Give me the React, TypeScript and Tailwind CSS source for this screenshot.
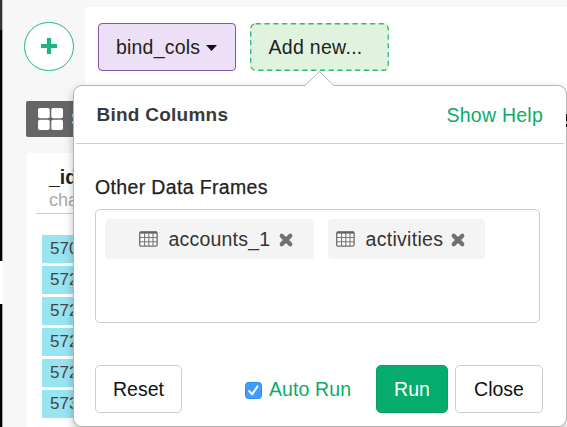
import type { ReactNode } from "react";

function TableIcon() {
  return (
    <svg className="h-4 w-[19px] shrink-0" viewBox="0 0 19 16" fill="none">
      <rect x="0.7" y="0.8" width="17.4" height="14.4" rx="1.5" fill="#fafafa" stroke="#6d6d6d" strokeWidth="1.3" />
      <path d="M1 1.6h17" stroke="#626262" strokeWidth="2" />
      <path d="M1 6.5h17M1 10.7h17M5.6 2v13M9.8 2v13M14 2v13" stroke="#777" strokeWidth="1.1" />
    </svg>
  );
}

function CloseIcon() {
  return (
    <svg className="h-[14px] w-[14px] shrink-0" viewBox="0 0 14 14">
      <path d="M2.2 2.2l9.6 9.6M11.8 2.2l-9.6 9.6" stroke="#707070" strokeWidth="4.2" />
      <path d="M2.5 2.5l9 9M11.5 2.5l-9 9" stroke="#707070" strokeWidth="3.6" strokeLinecap="round" />
    </svg>
  );
}

function Button({ className, children }: { className: string; children: ReactNode }) {
  return (
    <button className={`box-border flex h-12 items-center justify-center rounded-[5px] border pt-[2px] text-[19.5px] ${className}`}>
      {children}
    </button>
  );
}

const rows = ["570", "572", "572", "572", "572", "573"];

function Background() {
  return (
    <div className="flex h-full">
      <div className="flex w-[3px] shrink-0 flex-col">
        <div className="h-[30px] border-r border-[#bbb] bg-[#333]" />
        <div className="h-[231px] border-r border-[#aaa] bg-black" />
        <div className="h-[43px] bg-white" />
        <div className="flex-1 border-r border-[#aaa] bg-black" />
      </div>
      <div className="flex min-w-0 flex-1 flex-col">
        <div className="flex h-[95px]">
          <div className="w-[82px] shrink-0 pl-[21px] pt-[22px]">
            <div className="flex h-[49px] w-[50px] items-center justify-center rounded-full border-[1.3px] border-[#1fb581] bg-white">
              <svg className="mb-px h-4 w-4" viewBox="0 0 16 16">
                <path d="M8 1.8v12.4M1.8 8h12.4" stroke="#1fb581" strokeWidth="4.2" strokeLinecap="square" />
              </svg>
            </div>
          </div>
          <div className="mt-[7px] flex flex-1 items-start bg-white pl-[13px] pt-4">
            <div className="flex h-12 w-[138px] items-center rounded-[4px] border border-[#8655a8] bg-[#eddff6] pl-[17px] text-[19.5px] text-[#222]">
              <span className="pt-[2px] tracking-[0.2px]">bind_cols</span>
              <svg className="ml-[6px] mt-[2px] h-[6px] w-[11px]" viewBox="0 0 11 6"><path d="M0 0h11L5.5 6z" fill="#111" /></svg>
            </div>
            <div className="relative ml-[14px] flex h-12 w-[139px] items-center rounded-[5px] bg-[#dff3df] pl-[18.5px] text-[19.5px] text-[#222]">
              <svg className="absolute inset-0 h-12 w-[139px]" viewBox="0 0 139 48" fill="none">
                <rect x="0.75" y="0.75" width="137.5" height="46.5" rx="5" stroke="#2cb67e" strokeWidth="1.3" strokeDasharray="5 3.8" />
              </svg>
              <span className="pt-[2px] tracking-[0.3px]">Add new...</span>
            </div>
          </div>
        </div>
        <div className="ml-[23px] mr-10 mt-[6px] flex h-9 items-center rounded-[2px] bg-[#666] pl-3">
          <svg className="h-[22px] w-[25px]" viewBox="0 0 25 22" fill="white">
            <rect width="11.7" height="10.3" rx="1.8" /><rect x="13.3" width="11.7" height="10.3" rx="1.8" />
            <rect y="11.7" width="11.7" height="10.3" rx="1.8" /><rect x="13.3" y="11.7" width="11.7" height="10.3" rx="1.8" />
          </svg>
          <span className="ml-2 text-[18px] text-white">S</span>
        </div>
        <div className="ml-6 mt-4 flex-1 rounded-tl-[2px] bg-white">
          <div className="ml-[9px] h-[61px] border-b border-[#ccc] pl-[13px] pt-3">
            <div className="h-6 text-[19.5px] font-bold leading-6 text-[#222]">_id</div>
            <div className="h-[23px] text-[18px] leading-[23px] text-[#aaa]">cha</div>
          </div>
          <div className="ml-[15px] mt-[21px] flex flex-col gap-[3px]">
            {rows.map((r, i) => (
              <div key={i} className="h-7 bg-[#99e4f2] pl-[8px] text-[17px] leading-7 text-[#444]">{r}</div>
            ))}
          </div>
        </div>
      </div>
    </div>
  );
}

function Popover() {
  return (
    <div className="absolute left-[73px] top-[85px] flex h-[342px] w-[494px] flex-col rounded-[9px] border border-[#b4b4b4] bg-white shadow-[0_4px_10px_rgba(0,0,0,0.25)]">
      <svg className="absolute left-[231px] top-[-15px] h-4 w-[30px]" viewBox="0 0 30 16">
        <path d="M0 14.5L14.5 0.5L29 14.5V16H0z" fill="white" />
        <path d="M0 14.5L14.5 0.5L29 14.5" fill="none" stroke="#b4b4b4" />
      </svg>
      <svg className="absolute right-[-1px] top-[27px] h-[15px] w-px" viewBox="0 0 1 15">
        <path d="M0 1h1v7H0zM0 11h1v3H0z" fill="#111" />
      </svg>
      <div className="mx-[2px] flex h-[58px] shrink-0 items-center justify-between border-b border-[#d0d0d0] pl-[20.5px] pr-[21px] pt-[2px]">
        <h1 className="text-[19px] font-bold tracking-[0.25px] text-[#3a3a3a]">Bind Columns</h1>
        <a className="text-[19.5px] tracking-[0.25px] text-[#0cab67]">Show Help</a>
      </div>
      <div className="flex flex-1 flex-col pl-[21px]">
        <label className="mt-[29px] h-7 text-[19.5px] leading-7 tracking-[0.35px] text-[#222] [-webkit-text-stroke:0.25px_#222]">Other Data Frames</label>
        <div className="mt-2 flex h-[114px] w-[445px] shrink-0 items-start gap-[14px] rounded-[5px] border border-[#ccc] pl-[9px] pt-[9px]">
          <div className="flex h-10 w-[209px] items-center rounded-[4px] bg-[#f4f4f4] pl-[33.5px] text-[19.5px] text-[#333]">
            <TableIcon /><span className="ml-[11px] pt-[2px] tracking-[0.2px]">accounts_1</span><span className="ml-[9px] pt-px"><CloseIcon /></span>
          </div>
          <div className="flex h-10 w-[157px] items-center rounded-[4px] bg-[#f4f4f4] pl-[7.5px] text-[19.5px] text-[#333]">
            <TableIcon /><span className="ml-[11px] pt-[2px] tracking-[0.3px]">activities</span><span className="ml-2 pt-px"><CloseIcon /></span>
          </div>
        </div>
        <div className="mt-[42px] flex items-center">
          <Button className="w-[87px] border-[#ccc] bg-white text-[#111]">Reset</Button>
          <label className="ml-[63px] flex items-center text-[19.5px] text-[#0cab67]">
            <svg className="mt-[2px] h-[17px] w-[17px]" viewBox="0 0 17 17" fill="none">
              <rect x="0.5" y="0.5" width="16" height="16" rx="3" fill="#429cff" stroke="#258bf8" />
              <path d="M4.1 9l3 3.4 5.4-8" stroke="white" strokeWidth="1.9" strokeLinecap="round" strokeLinejoin="round" />
            </svg>
            <span className="ml-[7px] w-[107px] pt-[2px] tracking-[0.1px]">Auto Run</span>
          </label>
          <Button className="w-[72px] border-[#07a264] bg-[#05ac6b] text-white">Run</Button>
          <Button className="ml-[7px] w-[88px] border-[#ccc] bg-white text-[#111]">Close</Button>
        </div>
      </div>
    </div>
  );
}

export default function App() {
  return (
    <main className="relative h-[427px] w-[567px] overflow-hidden bg-[#f7f7f7] font-['Liberation_Sans',Arial,sans-serif]">
      <Background />
      <Popover />
    </main>
  );
}
